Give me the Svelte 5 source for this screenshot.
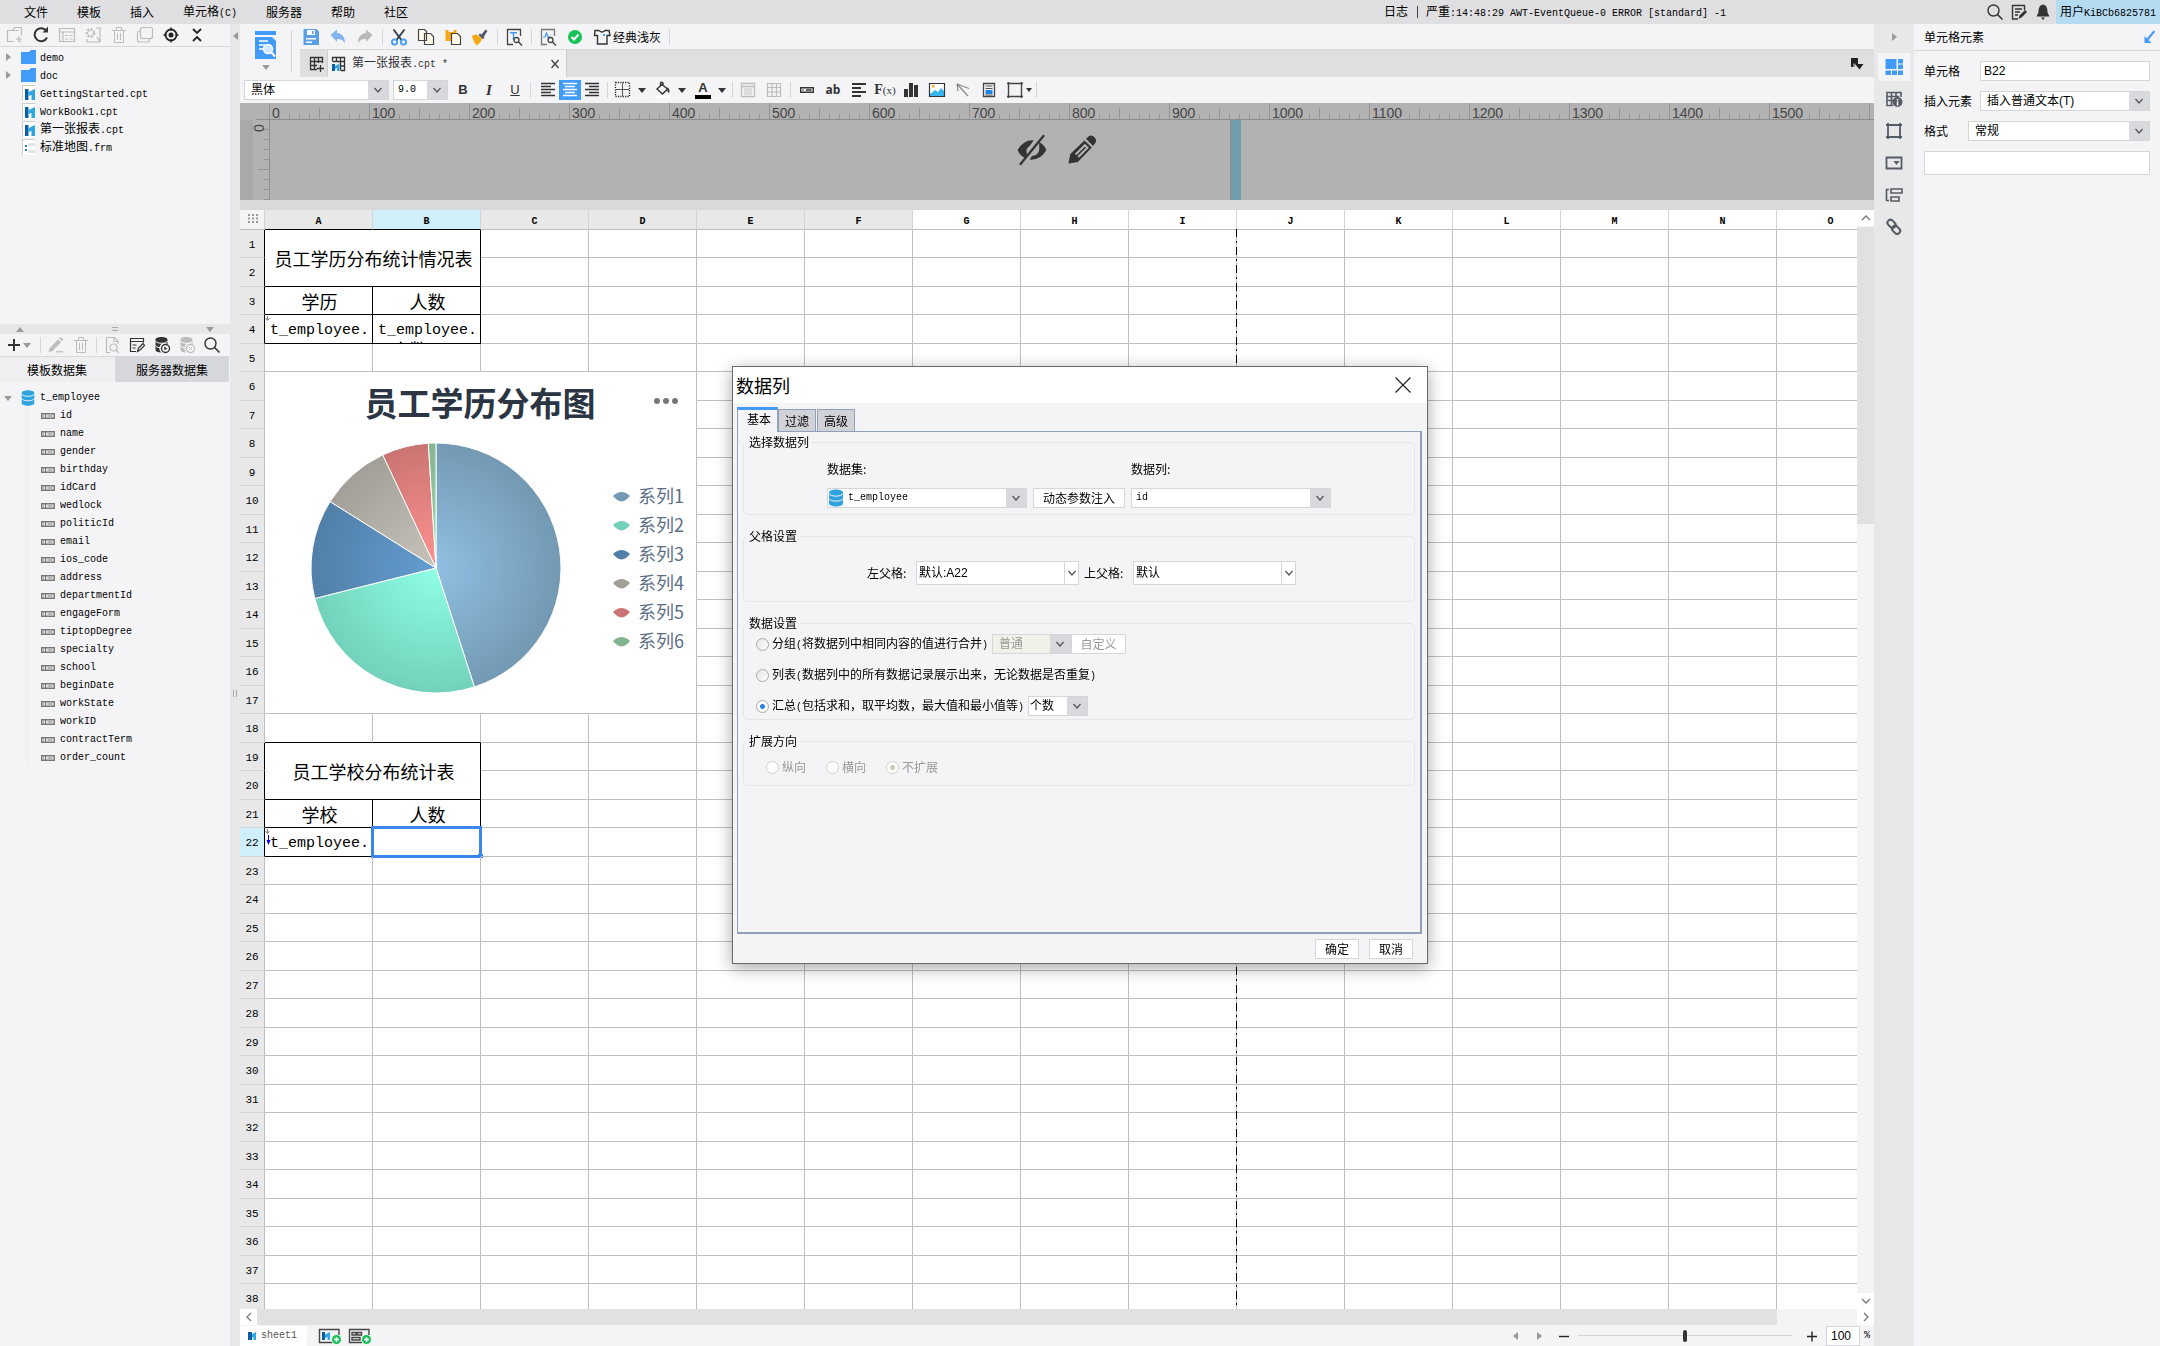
<script>
  const menus = ['文件', '模板', '插入', '单元格(C)', '服务器', '帮助', '社区'];

  const files = [
    { name: 'demo', kind: 'folder' },
    { name: 'doc', kind: 'folder' },
    { name: 'GettingStarted.cpt', kind: 'cpt' },
    { name: 'WorkBook1.cpt', kind: 'cpt' },
    { name: '第一张报表.cpt', kind: 'cpt' },
    { name: '标准地图.frm', kind: 'frm' }
  ];

  const fields = [
    'id', 'name', 'gender', 'birthday', 'idCard', 'wedlock', 'politicId', 'email',
    'ios_code', 'address', 'departmentId', 'engageForm', 'tiptopDegree', 'specialty',
    'school', 'beginDate', 'workState', 'workID', 'contractTerm', 'order_count'
  ];

  const cols = 'ABCDEFGHIJKLMNO'.split('');
  const rows = Array.from({ length: 38 }, (_, i) => i + 1);

  // Cells with content or a merged area, keyed by address.
  const cells = {
    A1: { text: '员工学历分布统计情况表', cs: 2, rs: 2, box: true },
    A3: { text: '学历', box: true },
    B3: { text: '人数', box: true },
    A4: { lines: ['t_employee.'], box: true, arrow: true },
    B4: { lines: ['t_employee.', '个数(id)'], box: true },
    A6: { chart: true, cs: 4, rs: 12 },
    A19: { text: '员工学校分布统计表', cs: 2, rs: 2, box: true },
    A21: { text: '学校', box: true },
    B21: { text: '人数', box: true },
    A22: { lines: ['t_employee.'], box: true, arrow: true, parent: true },
    B22: { box: true, selected: true }
  };

  // Addresses swallowed by a merged area.
  const covered = new Set();
  for (const [addr, c] of Object.entries(cells)) {
    const c0 = cols.indexOf(addr[0]);
    const r0 = Number(addr.slice(1));
    for (let r = 0; r < (c.rs ?? 1); r++)
      for (let k = 0; k < (c.cs ?? 1); k++)
        if (r || k) covered.add(cols[c0 + k] + (r0 + r));
  }

  const boxedRow = (r) => r <= 4 || (r >= 19 && r <= 22);

  const slices = [
    { name: '系列1', from: 0, to: 162.1, light: '#90c0e2', dark: '#7399b3' },
    { name: '系列2', from: 162.1, to: 255.9, light: '#8fffe6', dark: '#73d1bb' },
    { name: '系列3', from: 255.9, to: 302.1, light: '#649dd2', dark: '#517fa7' },
    { name: '系列4', from: 302.1, to: 334.8, light: '#c9c4ba', dark: '#a19f98' },
    { name: '系列5', from: 334.8, to: 356.5, light: '#ff9290', dark: '#ca7573' },
    { name: '系列6', from: 356.5, to: 360, light: '#a2dcae', dark: '#82b490' }
  ];
  const cx = 171, cy = 196, R = 125;
  const pt = (deg) => {
    const a = (deg * Math.PI) / 180;
    return `${(cx + R * Math.sin(a)).toFixed(2)} ${(cy - R * Math.cos(a)).toFixed(2)}`;
  };
  const wedge = (s) => `M${cx} ${cy}L${pt(s.from)}A${R} ${R} 0 ${s.to - s.from > 180 ? 1 : 0} 1 ${pt(s.to)}Z`;

  const hTicks = Array.from({ length: 161 }, (_, i) => i);
  const vTicks = Array.from({ length: 8 }, (_, i) => i + 1);

  // Splits a label into CJK and Latin runs.
  const runs = (t) => t.match(/[\x00-\x7f]+|[^\x00-\x7f]+/g) ?? [];
  const isLatin = (t) => t.charCodeAt(0) < 128;

  const s = (w, c, d) => `<path d="${d}" fill="none" stroke="${c}" stroke-width="${w}"/>`;
  const f = (c, d) => `<path d="${d}" fill="${c}"/>`;
  const K = '#333', G = '#bcbcbc', B = '#419bf9';
  const trash = s(1, G, 'M3 5.5h14M7.5 5V2.500h5V5M5.500 5.500v12h9v-12M8.500 8v7M11.500 8v7');
  const lens = (c, x, y, r) => `<circle cx="${x}" cy="${y}" r="${r}" fill="#fff" stroke="${c}" stroke-width="1.300"/>` + s(1.5, c, `M${x + r - 1} ${y + r - 1}l4 4`);
  const db = (c, line) => f(c, 'M3 4.500c0-4 14-4 14 0v11c0 4-14 4-14 0z') + s(1, line, 'M3 5.500c1 3.500 13 3.500 14 0M3 10.500c1 3.500 13 3.500 14 0');
  const lines = (c, ds) => s(1.3, c, ds);

  const icons = {
    newFolder: s(1.2, G, 'M9 16.500H2.500v-11h5l2-3h7v8M2.500 5.500h11M14 11v6M11 14h6M16.500 16.500h-3'),
    refresh: s(2, K, 'M15.500 6A6.500 6.500 0 1 0 16 12.500') + f(K, 'M11.500 7.500h5.500v-6z'),
    props: s(1.2, G, 'M2.500 3.500h15v13h-15zM2.500 7h15M6 7v9M8 10.500h3M8 14h3M12.500 10.500h3M12.500 14h3'),
    gear: s(1.2, G, 'M13 3h4v14H4v-3M14 12l3 5') + `<circle cx="7.500" cy="8" r="3.500" fill="none" stroke="${G}" stroke-width="2.500" stroke-dasharray="2 1.200"/>`,
    trash,
    clone: s(1.2, G, 'M7.500 2.500h8q2 0 2 2v7q0 2-2 2h-8q-2 0-2-2v-7q0-2 2-2zM5.500 6h-1q-2 0-2 2v7q0 2 2 2h8q2 0 2-2v-1'),
    target: `<circle cx="10" cy="10" r="5.500" fill="none" stroke="#222" stroke-width="1.800"/><circle cx="10" cy="10" r="2.500" fill="#222"/>` + s(1.5, '#222', 'M10 2.500v3M10 14.500v3M2.500 10h3M14.500 10h3'),
    collapse: s(1.8, '#222', 'M6 4l4 4 4-4M6 16l4-4 4 4'),
    plus: s(2, K, 'M10 4v12M4 10h12'),
    pencil: f(G, 'M3.500 13.500l8.500-9 3 2.500-8.500 9-4 1zM13 3.500l1.500-1.500 3 2.500-1.500 1.500z') + s(1.3, G, 'M10 16.800h7'),
    docFind: s(1.2, G, 'M8 17.500H4.500v-15h8l3.500 3.500v3M12 2.500v4h4') + `<circle cx="11.500" cy="12.500" r="3.500" fill="none" stroke="${G}" stroke-width="1.200"/>` + s(1.2, G, 'M14 15l3 3'),
    winEdit: s(1.2, K, 'M9 16.500H3.500v-13h13v4M3.500 6.500h13M5.500 10h4M5.500 13h3') + s(1.2, K, 'M10.500 16.500l1-3.500 4.500-4.500 1.500 2-4.500 4.500z'),
    dbRun: f(K, 'M3.500 4.500c0-3.500 12-3.500 12 0v4.500a5 5 0 0 0-6 8.500c-4 0-6-1-6-2.500z') + s(1, '#fff', 'M3.500 6c1 3 11 3 12 0M3.500 10.500c1 2 4 2.500 6 2') + `<circle cx="13.500" cy="13.500" r="4" fill="#fff" stroke="${K}" stroke-width="1.400"/>` + f(K, 'M12.300 11.500v4l3-2z'),
    dbDel: f(G, 'M3.500 4.500c0-3.500 12-3.500 12 0v4.500a5 5 0 0 0-6 8.500c-4 0-6-1-6-2.500z') + s(1, '#fff', 'M3.500 6c1 3 11 3 12 0M3.500 10.500c1 2 4 2.500 6 2') + `<circle cx="13.500" cy="13.500" r="4" fill="#fff" stroke="${G}" stroke-width="1.400"/>` + s(1, G, 'M12 12l3 3M15 12l-3 3'),
    search: `<circle cx="8.500" cy="8.500" r="5.500" fill="none" stroke="${K}" stroke-width="1.400"/>` + s(1.6, K, 'M12.500 12.500l5 5'),
    note: s(1.4, K, 'M9 17H3.500V3.500h12V8M6 7h7M6 10h5M6 13h3') + f(K, 'M9.500 17l1-3.500 5.500-5.500 2 2-5.500 5.500z'),
    bell: f(K, 'M10 2.500c-4 1-4.500 4-4.500 8l-2 4h13l-2-4c0-4-.5-7-4.500-8zM8 15.500h4l-2 2.500z'),
    folder: f(B, 'M3 5h8l2-2h5v14H3z'),
    cpt: f('#fff', 'M4 2h13v16H4z') + s(1, '#ccc', 'M4.500 18V2.500H17') + f('#0a5fa8', 'M7 6h3.500v11H7z') + f('#2ea7e0', 'M10.500 9L17 6v11h-3.500v-5l-3 1z'),
    frm: f('#fff', 'M4 2h13v16H4z') + s(1, '#ccc', 'M4.500 18V2.500H17') + f('#e3e3e6', 'M10 6h7v3h-7zM10 13h7v3h-7z') + f('#1b7fc4', 'M7 8h2v2H7zM7 12h2v2H7z'),
    db: db('#2fa4df', '#f4f4f7'),
    field: s(1.4, '#777', 'M3.700 7.700h12.600v4.600H3.700z') + s(1.2, '#777', 'M7.500 7.500v5M9.500 10h5M5 10h1'),
    save: f('#5b9ee6', 'M2.500 2h13l2.500 2.500V18h-15.500z') + f('#fff', 'M6 3h8v5H6zM5 11h10v1.500H5zM5 14.500h6v1.500H5z') + f('#5b9ee6', 'M11 4h1.500v3H11z'),
    undo: f('#82b4f0', 'M2.500 8l6.500-5.500v3.500c5.500 .5 8 4.500 8 10.500-2-3.500-4-4.500-8-4.500v3z'),
    redo: f('#b9b9b9', 'M17.500 8l-6.500-5.500v3.500c-5.500 .5-8 4.500-8 10.500 2-3.500 4-4.500 8-4.500v3z'),
    cut: s(2, '#3a3f4a', 'M4.500 2.500l8 10.500M15.500 2.500l-8 10.500') + `<circle cx="5.500" cy="15" r="2.600" fill="none" stroke="${B}" stroke-width="1.800"/><circle cx="14.500" cy="15" r="2.600" fill="none" stroke="${B}" stroke-width="1.800"/>`,
    copy: `<path d="M2.500 2.500h6l2 2v9h-8zM8.500 6.500h6l3 3v8h-9z" fill="#fffbe8" stroke="#444" stroke-width="1.200"/>`,
    paste: f('#f5a914', 'M2.500 3h11v11h-11z') + f('#f4f4f7', 'M5.500 2h5v3h-5z') + `<path d="M8.500 6.500h6l3 3v8h-9z" fill="#fffbe8" stroke="#444" stroke-width="1.200"/>`,
    brush: f('#f5a914', 'M2 8.500l4.500-1 5.500 4-1.500 3.500-3.500 3.500q-4-3.500-5-10z') + f('#555a66', 'M8.500 8l1.500-1.500 1.500 1L15.500 2.500l2 1.500-3.500 5.500.5 1.500-2 1z'),
    textFind: s(1.3, '#444', 'M9 17.500H3.500v-15h13V9') + s(1.5, B, 'M6 5.700h7M9.500 6v7') + lens('#444', 12.5, 13, 2.5),
    chartFind: s(1.3, '#777', 'M9 17.500H3.500v-15h13V9') + s(1.2, B, 'M5 10h2l1.500-4 2 5 1-2') + lens('#444', 12.5, 13, 2.5),
    ok: `<circle cx="10" cy="10" r="7" fill="#17c257"/>` + s(2, '#fff', 'M6.500 10l2.500 2.500 4.500-5'),
    shirt: s(1.4, K, 'M7 3.500H3L2.500 8.500H5.500v8.500h9.500V8.500h3L17 3.500h-4q-3 3-6 0') + f(B, 'M11 7h2v2h-2z'),
    newSheet: s(1.3, K, 'M16.500 9V3.500h-12v12H11M4.500 7.500h12M4.500 11.500H11M8.500 3.500v12M12.500 3.500V9M14.500 11v7M11 14.500h7'),
    sheetTab: s(1.3, K, 'M16.500 17V3.500h-12V7M4.500 7.500h12M8.500 3.500v4M12.500 3.500v13M12.500 12h4M13 16.500h4') + f('#0a5fa8', 'M4 10h3v7H4z') + f('#2ea7e0', 'M7 12l4.500-2.500V17H9v-3l-2 1z'),
    left: lines(K, 'M3 3.500h14M3 6.500h10M3 9.500h14M3 12.500h10M3 15.500h14'),
    center: lines('#fff', 'M3 3.500h14M5 6.500h10M3 9.500h14M5 12.500h10M3 15.500h14'),
    right: lines(K, 'M3 3.500h14M7 6.500h10M3 9.500h14M7 12.500h10M3 15.500h14'),
    borders: `<path d="M2.500 2.500h14v14h-14z" fill="none" stroke="#222" stroke-width="1.300" stroke-dasharray="1.200 1.200"/>` + s(1, '#555', 'M9.500 3v13M3 9.500h13'),
    bucket: s(1.4, K, 'M9 4.500l5.500 4.500-5 5-5.500-5zM7.500 7V3q1-1.500 2.500 0V6') + f(K, 'M14.500 7q3 3 1.500 6-2.500-1-1.500-6z') + f('#fff', 'M2 15h16v3.500H2z'),
    mergeA: s(1.3, G, 'M3.500 3.500h13v13h-13zM3.500 6.500h13') + f('#ddd', 'M6 8h8v7H6z'),
    gridOff: s(1.2, G, 'M3.500 3.500h13v13h-13zM3.500 7.500h13M3.500 12h13M8 3.500v13M12.500 3.500v13'),
    column: s(1.4, K, 'M3.700 7.700h12.600v4.600H3.700zM9 10h5.500M5.500 10h1'),
    para: s(2, K, 'M3 4h14M3 8h9M3 12h14M3 16h9'),
    bars: f(K, 'M3 9h4v8H3zM8 3h4v14H8zM13 5h4v12h-4z'),
    image: f('#fff', 'M2 3h16v14H2z') + f('#39b5ee', 'M3 14l5-4 3 2 3-4 3 3v5H3z') + f('#f5a623', 'M5 5h2.500v2.500H5z') + s(1.2, '#333', 'M2.500 3.500h15v13h-15z'),
    slash: s(1.2, '#888', 'M4 4l12 4.500M4 4l11 12M4 4l1 7'),
    page: s(1.3, '#444', 'M4.500 3.500h11v13h-11z') + s(1.2, '#555', 'M6.500 6h7M6.500 8.500h7') + f('#1d86e0', 'M6.500 10h7v4h-7z') + s(1, '#555', 'M6.500 15h7'),
    square: s(1.4, '#444', 'M3.500 2v16M16.500 2v16M2 3.500h16M2 16.500h16'),
    pin: f('#222', 'M4 4h7v6H8v3H4z') + f('#f4f4f7', 'M6.500 9.500h1v4h-1z') + f('#222', 'M8 10h8.500l-4 5.500z'),
    cellEl: f(B, 'M1.500 2h11v10h-11zM14 2h5v4.500h-5zM14 7.500h5V12h-5zM1.500 13.500H7V18H1.500zM8 13.500h5V18H8zM14 13.500h5V18h-5z'),
    cellAttr: s(1.6, '#555b66', 'M9 16.500H3V3.500h14V8M3 7.500h12M3 11.500h6M7.500 3.500v13M12 3.500V8') + `<circle cx="13.500" cy="13" r="5" fill="#555b66"/>` + f('#fff', 'M12.800 10h1.500v1.500h-1.500zM12.800 12.500h1.500v4h-1.500z'),
    frame: s(1.8, '#555b66', 'M4 2v16M16 2v16M2 4h16M2 16h16'),
    widget: s(1.8, '#555b66', 'M2.500 4.500h15v11h-15z') + f('#555b66', 'M9.500 8h6l-3 4z'),
    cond: s(1.6, '#555b66', 'M5 4.500H2.500v11H5M7 4h11v4H7zM7 12h8v4H7z'),
    link: `<g transform="rotate(45 10 10)" fill="none" stroke="#555b66" stroke-width="2"><rect x="1.500" y="6.500" width="9" height="6" rx="3"/><rect x="9" y="7.500" width="9" height="6" rx="3"/></g>`,
    pop: s(2, B, 'M15.500 4L8 13') + f(B, 'M5.500 9v7h7z'),
    hide: f('#333', 'M1 10Q5 3.500 11 4L8.500 7.500A3.600 3.600 0 0 0 7 12.500L5.500 15Q2.500 13.500 1 10zM14.500 5Q17.500 6.500 19 10 15.500 16.500 8.500 16l1.500-2.200q4-.3 4.500-4z') + s(1.4, '#333', 'M17.500.8L2.500 19.200'),
    edit: f('#333', 'M1.500 18.500l1.200-6L11.500 4l4.600 4.500-8.700 9zM12.500 3l1.600-1.500q2-1.200 3.700.5t.5 3.700L16.900 7.500z') + s(1.3, '#b2b2b2', 'M6 12.800l5.800-5.800 1.600 1.600-5.800 5.800'),
    addCpt: s(1.4, '#444', 'M14 16.500H1.500v-13H21V9') + f('#0a5fa8', 'M4 6h3v8H4z') + f('#2ea7e0', 'M7 8.500L12 6v8H9.500v-3L7 12z') + `<circle cx="18.500" cy="13.500" r="4.500" fill="#17c257"/>` + s(1.6, '#fff', 'M18.500 11v5M16 13.500h5'),
    addForm: s(1.4, '#444', 'M14 16.500H1.500v-13H21V9M4 6.500h4v2.500H4zM9.500 6.500h4v2.500h-4zM4 11.500h8v2.500H4z') + `<circle cx="18.500" cy="13.500" r="4.500" fill="#17c257"/>` + s(1.6, '#fff', 'M18.500 11v5M16 13.500h5'),
    sheetMark: f('#0a5fa8', 'M4 6h4v8H4z') + f('#2ea7e0', 'M8 8l4-2v8H9.500v-3L8 12z')
  };

  const fileTools = [['newFolder', '新建文件夹'], ['refresh', '刷新'], ['props', '属性'], ['gear', '设置'], ['trash', '删除'], ['clone', '复制'], ['target', '定位'], ['collapse', '收起']];
  const mainTools = [['save', '保存'], ['undo', '撤销'], ['redo', '重做'], null, ['cut', '剪切'], ['copy', '复制'], ['paste', '粘贴'], ['brush', '格式刷'], null, ['textFind', '查找'], null, ['chartFind', '检测'], ['ok', '校验']];
  const sideTabs = [['cellEl', '单元格元素'], ['cellAttr', '单元格属性'], ['frame', '悬浮元素'], ['widget', '控件设置'], ['cond', '条件属性'], ['link', '超级链接']];

  let modes = $state('sum');
</script>

{#snippet icon(name, w = 20)}
  <svg class="ic" width={w} height="20" viewBox="0 0 {w} 20" aria-hidden="true">{@html icons[name]}</svg>
{/snippet}

{#snippet mix(text)}{#each runs(text) as r}{#if isLatin(r)}<span class="la">{r}</span>{:else}{r}{/if}{/each}{/snippet}

{#snippet tool(name, label)}
  <button class="tool" aria-label={label}>{@render icon(name)}</button>
{/snippet}

{#snippet tri(dir = 'to-down')}<span class="tri {dir}"></span>{/snippet}

{#snippet combo(label, value, cls)}
  <span class="combo {cls}">
    <select aria-label={label} disabled={cls.includes('off')}><option>{value}</option></select>
    <span class="arr"><svg width="10" height="8" viewBox="0 0 10 8"><path d="M1.500 2L5 6l3.500-4" fill="none" stroke="#555" stroke-width="1.300" /></svg></span>
  </span>
{/snippet}

<div class="app">
  <header class="menubar">
    <nav>
      {#each menus as m}<button class="menu">{@render mix(m)}</button>{/each}
    </nav>
    <p class="log">日志<i></i>{@render mix('严重:14:48:29 AWT-EventQueue-0 ERROR [standard] -1')}</p>
    <div class="account">
      {@render tool('search', '搜索')}
      {@render tool('note', '反馈')}
      {@render tool('bell', '消息')}
      <button class="user">{@render mix('用户KiBCb6825781')}</button>
    </div>
  </header>

  <div class="body">
    <aside class="side">
      <div class="tools">
        {#each fileTools as [n, l]}{@render tool(n, l)}{/each}
      </div>
      <ul class="files">
        {#each files as file}
          <li class={file.kind}>
            <span class="exp">{#if file.kind === 'folder'}{@render tri('to-right')}{/if}</span>
            {@render icon(file.kind)}
            <span>{@render mix(file.name)}</span>
          </li>
        {/each}
      </ul>
      <div class="hsplit">{@render tri('to-up')}<span class="grip"></span>{@render tri()}</div>
      <div class="tools data">
        {@render tool('plus', '新增')}{@render tri()}
        <span class="sep"></span>
        {@render tool('pencil', '编辑')}{@render tool('trash', '删除')}
        <span class="sep"></span>
        {@render tool('docFind', '预览')}{@render tool('winEdit', '存储过程')}{@render tool('dbRun', '连接')}{@render tool('dbDel', '断开')}{@render tool('search', '搜索')}
      </div>
      <div class="dstabs">
        <button class="on">模板数据集</button><button>服务器数据集</button>
      </div>
      <div class="tree">
        <p class="root">{@render tri()}{@render icon('db')}<span class="la">t_employee</span></p>
        <ul>
          {#each fields as name}
            <li>{@render icon('field')}<span class="la">{name}</span></li>
          {/each}
        </ul>
      </div>
    </aside>

    <div class="vsplit">{@render tri('to-left')}<span class="vgrip"></span></div>

    <main>
      <div class="top">
        <button class="preview" aria-label="预览">
          <svg width="24" height="30" viewBox="0 0 24 30"><path d="M1 1h21v4H1zM1 7h17l4 4v18H1z" fill="#419bf9" /><path d="M5 11h9M5 15h6M5 19h4" stroke="#fff" stroke-width="1.500" /><circle cx="14" cy="19" r="4.500" fill="#cfe6ff" stroke="#fff" stroke-width="1.500" /><path d="M17 22l4 4.500" stroke="#fff" stroke-width="2" /></svg>
          {@render tri()}
        </button>
        <div class="stack">
          <div class="maintools">
            {#each mainTools as t}
              {#if t}{@render tool(t[0], t[1])}{:else}<span class="sep"></span>{/if}
            {/each}
            <button class="theme">{@render icon('shirt')}经典浅灰</button>
            <span class="sep"></span>
          </div>
          <div class="tabbar">
            <button class="new" aria-label="新建">{@render icon('newSheet')}</button>
            <div class="tab">
              {@render icon('sheetTab')}<span>{@render mix('第一张报表.cpt *')}</span>
              <button class="close" aria-label="关闭标签"><svg width="10" height="10" viewBox="0 0 10 10"><path d="M1.500 1l7 8M8.500 1l-7 8" stroke="#444" stroke-width="1.400" /></svg></button>
            </div>
            <button class="tool last" aria-label="标签列表">{@render icon('pin')}</button>
          </div>
        </div>
      </div>

      <div class="format">
        {@render combo('字体', '黑体', 'font')}
        {@render combo('字号', '9.0', 'size mono')}
        <button class="tool glyph" aria-label="加粗"><b>B</b></button>
        <button class="tool glyph" aria-label="斜体"><em>I</em></button>
        <button class="tool glyph" aria-label="下划线"><u>U</u></button>
        <span class="sep"></span>
        <div class="align">
          {@render tool('left', '左对齐')}
          <button class="tool on" aria-label="居中">{@render icon('center')}</button>
          {@render tool('right', '右对齐')}
        </div>
        <span class="sep"></span>
        <div class="drop">{@render tool('borders', '边框')}{@render tri('dark')}</div>
        <div class="drop">{@render tool('bucket', '填充')}{@render tri('dark')}</div>
        <div class="drop"><button class="tool glyph fore" aria-label="字体颜色"><b>A</b></button>{@render tri('dark')}</div>
        <span class="sep"></span>
        {@render tool('mergeA', '合并')}{@render tool('gridOff', '拆分')}
        <span class="sep gap"></span>
        {@render tool('column', '数据列')}
        <button class="tool glyph" aria-label="文本"><b class="ab">ab</b></button>
        {@render tool('para', '富文本')}
        <button class="tool glyph" aria-label="公式"><span class="fx"><b>F</b>(x)</span></button>
        {@render tool('bars', '图表')}{@render tool('image', '图片')}{@render tool('slash', '斜线')}{@render tool('page', '子报表')}
        <div class="drop tight">{@render tool('square', '悬浮')}{@render tri('dark')}</div>
        <span class="sep"></span>
      </div>

      <div class="canvas">
        <svg class="ruler" width="100%" height="17">
          {#each hTicks as i}
            <rect x={29 + i * 10} y={i % 10 === 0 ? 0 : i % 5 === 0 ? 5 : 11} width="1" height={i % 10 === 0 ? 17 : i % 5 === 0 ? 12 : 5} fill="#949494" />
            {#if i % 10 === 0 && i < 160}<text x={32 + i * 10} y="15">{i * 10}</text>{/if}
          {/each}
          <rect x="16" y="16" width="100%" height="1" fill="#8c8c8c" />
        </svg>
        <div class="area">
          <svg class="vruler" width="30" height="80">
            <rect width="13" height="80" fill="#a9a9a9" />
            <text transform="translate(14 8) rotate(-90)" x="-4" y="10">0</text>
            {#each vTicks as i}
              <rect x={i % 5 === 0 ? 18 : 24} y={i * 10 - 1} width={i % 5 === 0 ? 11 : 5} height="1" fill="#949494" />
            {/each}
            <rect x="29" width="1" height="80" fill="#8c8c8c" />
          </svg>
          <div class="page"></div>
          <div class="handle"></div>
          <div class="float">
            <button aria-label="隐藏"><svg width="32" height="32" viewBox="0 0 20 20">{@html icons.hide}</svg></button>
            <button aria-label="编辑"><svg width="32" height="32" viewBox="0 0 20 20">{@html icons.edit}</svg></button>
          </div>
        </div>
      </div>

      <div class="sheet">
        <div class="grid">
          <table>
            <colgroup><col class="rh" />{#each cols as c}<col class="cc" />{/each}</colgroup>
            <thead>
              <tr>
                <th class="corner"><svg width="12" height="9" viewBox="0 0 12 9"><path d="M0 1h2M4 1h2M8 1h2M0 4.500h2M4 4.500h2M8 4.500h2M0 8h2M4 8h2M8 8h2" stroke="#999" stroke-width="2" /></svg></th>
                {#each cols as c, i}
                  <th class:used={i < 6} class:sel={c === 'B'} class:under={i < 2}>{c}</th>
                {/each}
              </tr>
            </thead>
            <tbody>
              {#each rows as r}
                <tr>
                  <th class:sel={r === 22} class:edge={boxedRow(r)}>{r}</th>
                  {#each cols as c, i}
                    {@const addr = c + r}
                    {@const cell = cells[addr]}
                    {#if !covered.has(addr)}
                      <td colspan={cell?.cs ?? 1} rowspan={cell?.rs ?? 1} class:box={cell?.box} class:under={r === 18 && i < 2}>
                        {#if cell?.text}
                          {cell.text}
                        {:else if cell?.lines}
                          <div class="clip">{#each cell.lines as l}<div>{#each runs(l) as t}{#if isLatin(t)}<span class="code">{t}</span>{:else}{t}{/if}{/each}</div>{/each}</div>
                        {:else if cell?.chart}
                          <svg class="chart" width="100%" height="341" viewBox="0 0 431 341">
                            <defs>
                              {#each slices as sl, k}
                                <radialGradient id="g{k}" gradientUnits="userSpaceOnUse" {cx} {cy} r={R}>
                                  <stop offset="0" stop-color={sl.light} /><stop offset="1" stop-color={sl.dark} />
                                </radialGradient>
                              {/each}
                            </defs>
                            <text class="ctitle" x="215" y="44">员工学历分布图</text>
                            <circle cx="392" cy="29" r="3" /><circle cx="401" cy="29" r="3" /><circle cx="410" cy="29" r="3" />
                            {#each slices as sl, k}
                              <path d={wedge(sl)} fill="url(#g{k})" stroke="#fff" />
                              <path d="M{348} {124 + k * 29}q8.500 -8 17 0q-4 5 -8.500 5.500q-4.500 -.5 -8.500 -5.500z" fill={sl.dark} />
                              <text class="leg" x="373" y={131 + k * 29}>{sl.name}</text>
                            {/each}
                          </svg>
                        {/if}
                        {#if cell?.arrow}
                          <svg class="mark" width="9" height="18" viewBox="0 0 9 18">
                            <path d="M2.500 0v4M.5 2l2 2.500 2-2.500" fill="none" stroke="#888" />
                            {#if cell.parent}<path d="M3.500 6v6" stroke="#00f" /><path d="M1.500 11h4l-2 5z" fill="#00f" />{/if}
                          </svg>
                        {/if}
                        {#if cell?.selected}<span class="cursor"></span>{/if}
                      </td>
                    {/if}
                  {/each}
                </tr>
              {/each}
            </tbody>
          </table>
          <div class="pagebreak"></div>
        </div>
        <div class="vscroll">
          <button aria-label="向上滚动"><svg width="12" height="8" viewBox="0 0 12 8"><path d="M2 6l4-4 4 4" fill="none" stroke="#777" stroke-width="1.300" /></svg></button>
          <div class="thumb"></div>
          <button class="end" aria-label="向下滚动"><svg width="12" height="8" viewBox="0 0 12 8"><path d="M2 2l4 4 4-4" fill="none" stroke="#777" stroke-width="1.300" /></svg></button>
        </div>
      </div>

      <div class="hscroll">
        <button aria-label="向左滚动"><svg width="8" height="12" viewBox="0 0 8 12"><path d="M6 2L2 6l4 4" fill="none" stroke="#777" stroke-width="1.300" /></svg></button>
        <div class="thumb"></div>
        <button class="end" aria-label="向右滚动"><svg width="8" height="12" viewBox="0 0 8 12"><path d="M2 2l4 4-4 4" fill="none" stroke="#777" stroke-width="1.300" /></svg></button>
      </div>

      <footer>
        <button class="sheettab">{@render icon('sheetMark')}<span class="la">sheet1</span></button>
        <button class="add" aria-label="新增报表">{@render icon('addCpt', 24)}</button>
        <button class="add" aria-label="新增表单">{@render icon('addForm', 24)}</button>
        <div class="zoom">
          <button aria-label="上一页">{@render tri('to-left')}</button>
          <button aria-label="下一页">{@render tri('to-right')}</button>
          <button aria-label="缩小"><svg width="12" height="12" viewBox="0 0 12 12"><path d="M1 6.500h10" stroke="#222" stroke-width="1.400" /></svg></button>
          <input type="range" aria-label="缩放" min="0" max="100" value="50" />
          <button aria-label="放大"><svg width="12" height="12" viewBox="0 0 12 12"><path d="M1 6.500h10M6 1.500v10" stroke="#222" stroke-width="1.400" /></svg></button>
          <input class="pct" aria-label="缩放比例" value="100" /><span class="la">%</span>
        </div>
      </footer>
    </main>

    <nav class="strip">
      <span class="fold">{@render tri('to-right')}</span>
      {#each sideTabs as [n, l], i}
        <button class:on={i === 0} aria-label={l}>{@render icon(n)}</button>
      {/each}
    </nav>

    <aside class="props">
      <h2>单元格元素<button class="tool" aria-label="弹出">{@render icon('pop')}</button></h2>
      <div class="form">
        <label class="r1"><span>单元格</span><input value="B22" /></label>
        <div class="r1"><span>插入元素</span>{@render combo('插入元素', '插入普通文本(T)', 'grow')}</div>
        <div class="r2"><span>格式</span>{@render combo('格式', '常规', 'grow')}</div>
        <input class="value" aria-label="内容" />
      </div>
    </aside>
  </div>
</div>

<div class="dialog" role="dialog" aria-labelledby="dlg">
  <div class="title">
    <h1 id="dlg">数据列</h1>
    <button aria-label="关闭"><svg width="18" height="18" viewBox="0 0 18 18"><path d="M1.500 1.500l15 15M16.500 1.500l-15 15" stroke="#222" stroke-width="1.200" /></svg></button>
  </div>
  <div class="dtabs"><button class="on">基本</button><button>过滤</button><button>高级</button></div>
  <div class="panel">
    <fieldset>
      <legend>选择数据列</legend>
      <div class="pick">
        <span>数据集:</span><span></span><span>数据列:</span>
        <span class="withicon">{@render combo('数据集', 't_employee', 'mono grow')}{@render icon('db')}</span>
        <button class="btn">动态参数注入</button>
        {@render combo('数据列', 'id', 'mono grow')}
      </div>
    </fieldset>
    <fieldset>
      <legend>父格设置</legend>
      <div class="parents">
        <span class="cap">左父格:</span>{@render combo('左父格', '默认:A22', 'tall')}
        <span class="cap">上父格:</span>{@render combo('上父格', '默认', 'tall')}
      </div>
    </fieldset>
    <fieldset>
      <legend>数据设置</legend>
      <div class="modes">
        <div><label><input type="radio" name="mode" value="group" bind:group={modes} /><span>{@render mix('分组(将数据列中相同内容的值进行合并)')}</span></label>{@render combo('分组方式', '普通', 'off')}<button class="btn custom" disabled>自定义</button></div>
        <div><label><input type="radio" name="mode" value="list" bind:group={modes} /><span>{@render mix('列表(数据列中的所有数据记录展示出来，无论数据是否重复)')}</span></label></div>
        <div><label><input type="radio" name="mode" value="sum" bind:group={modes} /><span>{@render mix('汇总(包括求和，取平均数，最大值和最小值等)')}</span></label>{@render combo('汇总方式', '个数', 'sum')}</div>
      </div>
    </fieldset>
    <fieldset>
      <legend>扩展方向</legend>
      <div class="expand">
        <label><input type="radio" name="dir" disabled />纵向</label>
        <label><input type="radio" name="dir" disabled />横向</label>
        <label><input type="radio" name="dir" disabled checked />不扩展</label>
      </div>
    </fieldset>
  </div>
  <div class="actions"><button class="btn">确定</button><button class="btn">取消</button></div>
</div>

<style>
  :global(body) { background: #f4f4f7; }
  .app, .dialog {
    font: 12px/18px 'Noto Sans CJK SC', 'Liberation Sans', sans-serif;
    color: #000;
  }
  .app *, .dialog * { box-sizing: border-box; }
  .app { height: 100vh; display: flex; flex-direction: column; background: #f4f4f7; overflow: hidden; white-space: nowrap; }
  button, input, select { font: inherit; color: inherit; margin: 0; padding: 0; border: 0; background: none; border-radius: 0; }
  p, ul, h1, h2 { margin: 0; padding: 0; font: inherit; }
  ul { list-style: none; }
  .la { font-family: 'Liberation Mono', monospace; font-size: 10px; white-space: pre; }
  .ic { display: block; flex: none; }
  .tool { flex: none; width: 22px; height: 20px; display: flex; align-items: center; justify-content: center; }
  .sep { flex: none; width: 1px; height: 16px; background: #d6d6da; }

  .tri { flex: none; width: 0; height: 0; border: 4px solid transparent; }
  .to-down { border-top: 5px solid #9a9a9a; border-bottom: 0; }
  .to-up { border-bottom: 5px solid #9a9a9a; border-top: 0; }
  .to-right { border-left: 5px solid #9a9a9a; border-right: 0; }
  .to-left { border-right: 5px solid #9a9a9a; border-left: 0; }
  .dark { border-top: 5px solid #333; border-bottom: 0; margin: 0 2px; }

  .menubar { flex: none; height: 24px; display: flex; align-items: center; background: #dfdfe1; }
  .menubar nav { display: flex; gap: 29px; padding-left: 24px; }
  .log { margin-left: auto; margin-right: 258px; display: flex; align-items: baseline; }
  .log i { align-self: center; width: 1px; height: 12px; background: #444; margin: 0 8px 0 9px; }
  .account { display: flex; align-items: center; gap: 2px; }
  .user { width: 104px; height: 24px; background: #b5dbf3; }

  .body { flex: 1; display: flex; min-height: 0; }
  .side { flex: none; width: 230px; display: flex; flex-direction: column; }
  .side .tools { flex: none; height: 23px; display: flex; align-items: center; gap: 4px; padding-left: 4px; border-bottom: 1px solid #d9d9db; }
  .files { flex: none; height: 277px; padding-top: 1px; }
  .files li { height: 18px; display: flex; align-items: center; padding-left: 6px; }
  .files .ic { margin-right: 2px; }
  .files .exp { width: 12px; display: flex; }
  .hsplit { flex: none; height: 10px; background: #e7e7e7; display: flex; align-items: center; justify-content: space-between; padding: 0 16px; }
  .grip { width: 6px; height: 4px; border: solid #aaa; border-width: 1px 0; }
  .side .tools.data { gap: 3px; padding-left: 3px; }
  .data .tri { margin: 0 5px 0 -5px; }
  .data .sep { margin: 0 1px; }
  .dstabs { flex: none; display: flex; height: 25px; gap: 1px; }
  .dstabs button { width: 114px; background: #d6d7db; }
  .dstabs .on { background: #efeff2; }
  .tree { padding-top: 7px; }
  .root { height: 18px; display: flex; align-items: center; gap: 2px; padding-left: 4px; }
  .root .tri { margin-right: 4px; }
  .root .ic { height: 18px; }
  .tree ul { margin-left: 27px; border-left: 1px solid #ececef; }
  .tree li { height: 18px; display: flex; align-items: center; gap: 2px; padding-left: 10px; }

  .vsplit { flex: none; width: 10px; background: #e7e7e7; display: flex; flex-direction: column; align-items: center; padding-top: 8px; }
  .vgrip { width: 4px; height: 7px; border: solid #aaa; border-width: 0 1px; margin: auto 0; }

  main { flex: 1; min-width: 0; display: flex; flex-direction: column; }
  .top { flex: none; display: flex; height: 53px; }
  .preview { flex: none; width: 52px; height: 42px; margin: 6px 8px 0 0; border-right: 1px solid #d6d6da; display: flex; flex-direction: column; align-items: center; gap: 5px; }
  .stack { flex: 1; min-width: 0; }
  .maintools { height: 25px; display: flex; align-items: center; gap: 5px; }
  .maintools .sep { margin-left: 1px; }
  .theme { display: flex; align-items: center; gap: 1px; margin: 0 2px 0 1px; }
  .tabbar { height: 28px; background: #dfdfe1; display: flex; align-items: center; border-top: 1px solid #d9d9db; }
  .new { width: 26px; display: flex; justify-content: flex-end; }
  .tab { width: 240px; height: 27px; margin-left: 1px; background: #f4f4f7; border: solid #cfcfd2; border-width: 0 1px; display: flex; align-items: center; gap: 4px; padding: 0 6px 0 0; color: #333; }
  .close { margin-left: auto; display: flex; }
  .tabbar .last { margin-left: auto; margin-right: 6px; }

  .format { flex: none; height: 26px; display: flex; align-items: center; gap: 4px; padding-left: 4px; }
  .glyph { font-size: 14px; color: #333; }
  .glyph em { font-family: 'Liberation Serif', serif; font-weight: bold; font-size: 15px; }
  .glyph b, .glyph u { font-family: 'Liberation Sans', sans-serif; font-size: 13px; }
  .glyph .ab { font-family: 'Open Sans', sans-serif; font-size: 12px; }
  .fore b { line-height: 14px; border-bottom: 4px solid #000; padding: 0 3px; }
  .glyph .fx { font-family: 'Liberation Serif', serif; font-size: 11px; }
  .glyph .fx b { font-family: 'Liberation Serif', serif; font-size: 14px; }
  .align { display: flex; margin-left: 2px; }
  .align .on { background: #419bf9; }
  .drop { display: flex; align-items: center; gap: 2px; }
  .drop.tight { gap: 0; }
  .tight .dark { border-width: 4px 3px 0; margin: 0; }
  .sep.gap { margin: 0 1px; }

  .combo { position: relative; flex: none; display: flex; height: 20px; border: 1px solid #d5d6da; background: #fff; }
  .combo select { appearance: none; flex: 1; min-width: 0; width: 100%; padding: 0 22px 0 6px; background: none; font-family: 'Liberation Sans', 'Noto Sans CJK SC', sans-serif; line-height: 18px; opacity: 1; }
  .combo.mono select { font-family: 'Liberation Mono', monospace; font-size: 10px; padding-left: 4px; }
  .arr { position: absolute; right: 0; top: 0; bottom: 0; width: 20px; background: #d8d9dd; display: flex; align-items: center; justify-content: center; pointer-events: none; }
  .font { width: 145px; }
  .size { width: 55px; }
  .combo.grow { flex: 1; }
  .tall { width: 163px; height: 24px; }
  .tall .arr { width: 14px; background: #fff; border-left: 1px solid #d5d6da; }
  .combo.tall select { padding-left: 2px; }
  .off { width: 79px; background: #f1f1ea; color: #999; }
  .sum { width: 60px; }
  .combo.sum select { padding: 0 0 0 1px; }

  .canvas { flex: none; background: #b2b2b2; border-bottom: 10px solid #d9d9db; }
  .ruler, .vruler { display: block; font: 14px 'Liberation Sans', sans-serif; fill: #444; }
  .area { position: relative; height: 80px; display: flex; }
  .page { width: 960px; }
  .handle { width: 11px; background: #6f9eab; border-left: 1px solid #8c8c8c; }
  .float { position: absolute; inset: 14px 0 auto; display: flex; justify-content: center; gap: 18px; }
  .float button { display: flex; }

  .sheet { flex: 1; min-height: 0; display: flex; background: #fff; }
  .grid { flex: 1; min-width: 0; position: relative; overflow: hidden; }
  table { table-layout: fixed; width: 1645px; border-collapse: separate; border-spacing: 0; }
  .rh { width: 25px; }
  .cc { width: 108px; }
  th { font: 10px/12px 'Liberation Mono', monospace; background: #e8e8e8; border: solid #d3d3d8; border-width: 0 1px 1px 0; padding: 0; }
  thead th { height: 20px; padding-top: 5px; background: #fff; border-bottom-color: #bfbfbf; font-weight: bold; }
  thead .used { background: #e8e8e8; }
  th.sel, thead .sel { background: #cfeffb; }
  thead .corner { background: #f4f4f7; padding: 2px 0 0 3px; }
  tbody th { border-right-color: #bfbfbf; font-size: 11px; padding-top: 2px; }
  tbody tr { height: 28px; }
  tbody tr:nth-child(even) { height: 29px; }
  td { position: relative; padding: 0; border: solid #bfbfbf; border-width: 0 1px 1px 0; font-size: 18px; line-height: 22px; text-align: center; vertical-align: middle; }
  td.box { border-color: #000; padding-left: 2px; }
  thead th.under, td.under { border-bottom-color: #000; }
  th.edge { border-right-color: #000; }
  .clip { height: 27px; line-height: 20px; overflow: hidden; }
  .clip div { height: 23px; }
  .code { font: 15px/20px 'Liberation Mono', monospace; }
  .chart { display: block; fill: #777; }
  .ctitle { font-size: 33px; font-weight: bold; fill: #2b3544; text-anchor: middle; }
  .leg { font-size: 18px; fill: #5b6f86; }
  .mark { position: absolute; left: 0; top: 1px; }
  .cursor { position: absolute; inset: -2px; border: 3px solid #3a86ee; }
  .cursor::after { content: ''; position: absolute; right: -4px; bottom: -3px; width: 5px; height: 4px; background: #3a86ee; }
  .pagebreak { position: absolute; left: 996px; top: 19px; bottom: 0; width: 1px; background: repeating-linear-gradient(#000 0 8px, transparent 8px 12px, #000 12px 14px, transparent 14px 18px); }

  .vscroll { flex: none; width: 17px; background: #f4f4f7; display: flex; flex-direction: column; }
  .vscroll button, .hscroll button { flex: none; width: 17px; height: 16px; background: #fff; display: flex; align-items: center; justify-content: center; }
  .vscroll .thumb { height: 27%; margin-top: 1px; background: #e1e1e1; }
  .vscroll .end { margin-top: auto; }
  .hscroll { flex: none; height: 16px; display: flex; }
  .hscroll .thumb { width: 93%; margin-right: auto; background: #e1e1e1; }

  footer { flex: none; height: 21px; display: flex; align-items: center; gap: 6px; }
  .sheettab { width: 67px; height: 20px; background: #fff; display: flex; align-items: center; padding-left: 4px; color: #555; margin-right: 5px; }
  .sheettab .ic { margin-right: -3px; }
  .add { display: flex; }
  .zoom { margin-left: auto; display: flex; align-items: center; gap: 4px; padding-right: 4px; }
  .zoom button { width: 20px; display: flex; justify-content: center; }
  .zoom .pct { width: 34px; height: 20px; background: #fff; border: 1px solid #d5d6da; padding-left: 4px; font-family: 'Liberation Sans', sans-serif; }
  input[type='range'] { appearance: none; width: 214px; height: 12px; background: linear-gradient(#d5d5d8, #d5d5d8) center / 100% 1px no-repeat; margin: 0 6px 0 0; }
  input[type='range']::-webkit-slider-thumb { appearance: none; width: 4px; height: 12px; border-radius: 2px; background: #333; }

  .strip { flex: none; width: 40px; background: #e8e8e8; display: flex; flex-direction: column; align-items: center; gap: 4px; }
  .fold { height: 25px; display: flex; align-items: center; }
  .strip button { width: 32px; height: 28px; display: flex; align-items: center; justify-content: center; }
  .strip .on { background: #f4f4f7; }

  .props { flex: none; width: 246px; }
  .props h2 { height: 27px; display: flex; align-items: center; justify-content: space-between; padding: 0 0 0 10px; border-bottom: 1px solid #d9d9db; }
  .form { padding: 10px 10px 0; display: flex; flex-direction: column; gap: 10px; }
  .r1, .r2 { display: flex; align-items: center; height: 20px; }
  .r1 > span:first-child { flex: none; width: 56px; }
  .r2 > span:first-child { flex: none; width: 44px; }
  .form input { flex: 1; min-width: 0; height: 20px; background: #fff; border: 1px solid #d5d6da; padding: 0 3px; font-family: 'Liberation Sans', sans-serif; }
  .form .value { flex: none; height: 24px; }

  .dialog { position: fixed; inset: 366px 0 auto; margin: 0 auto; width: 696px; height: 598px; box-sizing: border-box; border: 1px solid #6b6b6b; background: #f4f4f7; display: flex; flex-direction: column; box-shadow: 0 4px 16px rgba(0, 0, 0, 0.35); white-space: nowrap; }
  .title { flex: none; height: 36px; background: #fff; display: flex; align-items: center; justify-content: space-between; padding: 0 15px 0 3px; }
  .title h1 { font-size: 18px; }
  .title button { display: flex; }
  .dtabs { flex: none; height: 28px; display: flex; align-items: flex-end; gap: 1px; padding-left: 4px; }
  .dtabs button { width: 38px; height: 22px; background: #d1d2d7; border: solid #8fa0b8; border-width: 1px 1px 0; }
  .dtabs .on { width: 41px; height: 25px; margin: 0 -1px -1px 0; background: #f4f4f7; border-top: 3px solid #419bf9; padding: 0 0 5px 3px; position: relative; }
  .panel { flex: 1; margin: 0 5px 0 4px; border: 1px solid #8fa0b8; border-width: 1px 2px 2px 1px; padding: 1px 5px; display: flex; flex-direction: column; gap: 12px; }
  fieldset { margin: 0; padding: 0; min-width: 0; border: 1px solid #e5e5e8; border-radius: 5px; }
  legend { height: 18px; margin-left: 2px; padding: 0 3px; }
  .pick { display: grid; grid-template-columns: 200px 92px 200px; grid-auto-rows: 20px; column-gap: 6px; row-gap: 8px; padding: 9px 0 6px 83px; }
  .withicon { position: relative; display: flex; }
  .withicon > .ic { position: absolute; left: -1px; top: 0; }
  .withicon .combo.mono select { padding-left: 20px; }
  .btn { height: 20px; background: #fff; border: 1px solid #d5d6da; padding: 0 8px; line-height: 18px; }
  .btn:disabled { color: #999; }
  .parents { display: flex; align-items: center; gap: 5px; padding: 16px 0 16px 123px; }
  .cap { flex: none; width: 44px; }
  .modes { display: flex; flex-direction: column; gap: 11px; padding: 2px 0 3px 12px; }
  .modes > div { height: 20px; display: flex; align-items: center; }
  .modes .combo { margin-left: 4px; }
  .custom { width: 55px; }
  label { display: flex; align-items: center; gap: 3px; }
  label.r1 { gap: 0; }
  input[type='radio'] { appearance: none; flex: none; width: 13px; height: 13px; border: 1px solid #aaa; border-radius: 50%; background: linear-gradient(135deg, #e3e3e3, #fff); }
  input[type='radio']:checked { background: radial-gradient(circle, #2f7de0 0 2px, #fff 3px); }
  .expand { display: flex; gap: 20px; padding: 8px 0 9px 22px; color: #999; }
  .expand input[type='radio'] { border-color: #cfcfc4; background: #fff; }
  .expand input[type='radio']:checked { background: radial-gradient(circle, #c9c9b4 0 2px, #fff 3px); }
  .actions { flex: none; height: 29px; display: flex; gap: 10px; justify-content: flex-end; align-items: center; padding: 0 14px 0 0; }
  .actions .btn { width: 44px; padding: 0; }
</style>
